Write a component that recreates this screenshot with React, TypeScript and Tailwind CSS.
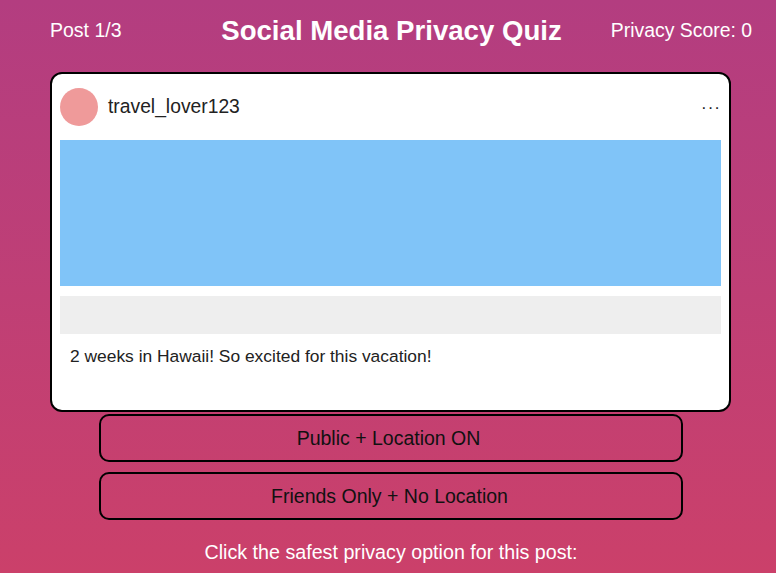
export default function App() {
  return (
    <div
      className="w-[776px] h-[573px] overflow-hidden bg-gradient-to-b from-[#b33d80] to-[#cb406a] text-white"
      style={{ fontFamily: '"Liberation Sans", Arial, sans-serif' }}
    >
      <div className="h-[60px] flex items-center justify-between pl-[50px] pr-[24px]">
        <span className="text-[19.5px] w-[160px] mt-[1px]">Post 1/3</span>
        <span className="text-[27.6px] font-bold mt-[1px]">Social Media Privacy Quiz</span>
        <span className="text-[19.4px] w-[179px] text-right mt-[1px]">Privacy Score: 0</span>
      </div>
      <div className="ml-[50px] mt-[12px] w-[681px] h-[340px] bg-white border-2 border-black rounded-[12px] text-[#222] flex flex-col">
        <div className="flex items-center h-[66px] pl-[8px] pr-[8px]">
          <div className="w-[38px] h-[38px] rounded-full bg-[#ef9a9a]" />
          <span className="ml-[10px] text-[19.3px] mt-[1px]">travel_lover123</span>
          <span className="ml-auto text-[17px] tracking-[1px] text-[#222] mt-[2px]">···</span>
        </div>
        <div className="mx-[8px] h-[146px] bg-[#80c4f8]" />
        <div className="mx-[8px] mt-[10px] h-[38px] bg-[#eeeeee]" />
        <div className="ml-[18px] mt-[9px] text-[17.4px]">2 weeks in Hawaii! So excited for this vacation!</div>
      </div>
      <div className="ml-[99px] mt-[2px] w-[584px] flex flex-col gap-[10px]">
        <div className="h-[48px] border-2 border-black rounded-[10px] flex items-center justify-center text-[19.5px] text-[#111] pt-[1px] pr-[5px]">
          Public + Location ON
        </div>
        <div className="h-[48px] border-2 border-black rounded-[10px] flex items-center justify-center text-[19.5px] text-[#111] pt-[1px] pr-[3px]">
          Friends Only + No Location
        </div>
      </div>
      <div className="mt-[18px] text-center text-[19.7px] pl-[6px]">Click the safest privacy option for this post:</div>
    </div>
  );
}
